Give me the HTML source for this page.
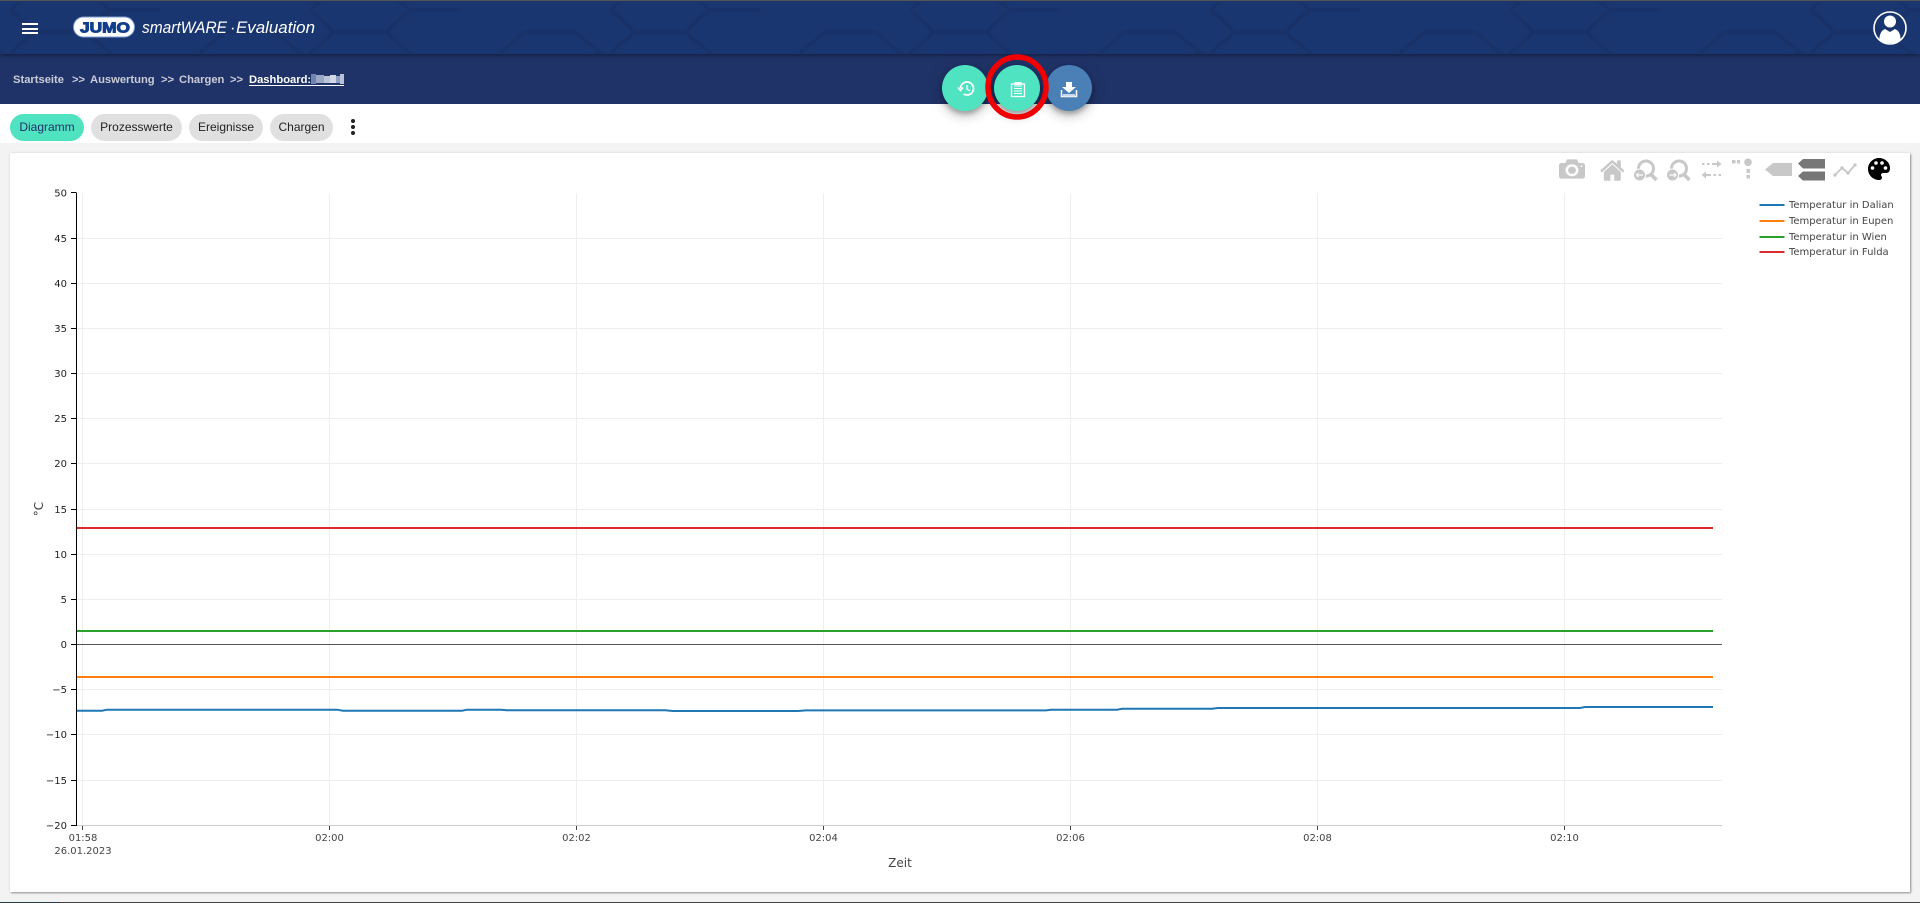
<!DOCTYPE html>
<html lang="de"><head><meta charset="utf-8"><title>JUMO smartWARE Evaluation</title>
<style>
html,body{margin:0;padding:0;width:1920px;height:903px;overflow:hidden;background:#f3f3f3;font-family:"Liberation Sans",sans-serif}
.a{position:absolute}
svg text{white-space:pre}
.t{position:absolute;top:114px;height:27px;border-radius:14px;background:#e0e0e0;color:#222;font-size:12px;line-height:27px;text-align:center}
.b{position:absolute;top:65px;width:46px;height:46px;border-radius:50%;box-shadow:0 3px 5px rgba(0,0,0,.25),0 6px 10px rgba(0,0,0,.14),0 1px 18px rgba(0,0,0,.12)}
.bc{position:absolute;top:73px;font-size:11.2px;font-weight:bold;color:#c9ccd8;line-height:14px;white-space:nowrap}
</style></head><body>
<div class="a" style="left:0;top:0;width:1920px;height:54px;background:#1a3670;box-shadow:0 1px 4px rgba(0,0,0,.45);z-index:2;border-top:1px solid #555;box-sizing:border-box">
<svg width="1920" height="53" style="position:absolute;left:0;top:0">
<defs><pattern id="h" width="300" height="86" patternUnits="userSpaceOnUse" patternTransform="translate(10,-12)"><path d="M0 21 25 0H75L100 21 75 43H25ZM100 21H150M25 43 0 64 25 86M75 43 100 64 75 86M190 64 215 43H265L290 64 265 86" fill="none" stroke="#000" stroke-opacity=".055" stroke-width="4"/></pattern></defs>
<rect width="1920" height="53" fill="url(#h)"/>
<g fill="#fff"><rect x="22" y="22" width="16" height="2"/><rect x="22" y="27" width="16" height="2"/><rect x="22" y="31" width="16" height="2"/></g>
<rect x="73.5" y="16" width="61" height="20" rx="10" fill="#fff" stroke="#7f9fd0"/>
<text x="80" y="31.500" font-size="15" font-weight="bold" fill="#123f8c" stroke="#123f8c" stroke-width="1" textLength="50" lengthAdjust="spacingAndGlyphs" font-family="Liberation Sans">JUMO</text>
<g font-size="16.500" font-style="italic" fill="#fff" font-family="Liberation Sans">
<text x="142" y="32" textLength="85" lengthAdjust="spacingAndGlyphs">smartWARE</text>
<text x="230" y="32" font-style="normal">·</text>
<text x="236" y="32" textLength="79" lengthAdjust="spacingAndGlyphs">Evaluation</text>
</g>
<circle cx="1890" cy="27" r="16" fill="none" stroke="#fff" stroke-width="1.6"/>
<circle cx="1890" cy="20.5" r="6" fill="#fff"/>
<path d="M1879.5 40C1879 34 1881 29.500 1885 28L1890 31 1895 28C1899 29.500 1901 34 1900.500 40 1894 43 1886 43 1879.500 40Z" fill="#fff"/>
</svg></div>
<div class="a" style="left:0;top:54px;width:1920px;height:50px;background:#203368"></div>
<div class="bc" style="left:13px">Startseite</div><div class="bc" style="left:72px">&gt;&gt;</div>
<div class="bc" style="left:90px">Auswertung</div><div class="bc" style="left:161px">&gt;&gt;</div>
<div class="bc" style="left:179px">Chargen</div><div class="bc" style="left:230px">&gt;&gt;</div>
<div class="bc" style="left:249px;color:#fff">Dashboard:</div>
<div class="a" style="left:249px;top:85px;width:95px;height:1px;background:#fff"></div>
<svg class="a" style="left:310px;top:73px" width="36" height="12"><rect x="1" y="1" width="5" height="10" fill="#6f84b0"/><rect x="6" y="2" width="8" height="8" fill="#9aa8c6"/><rect x="14" y="3" width="6" height="7" fill="#bcc5d8"/><rect x="20" y="2" width="6" height="8" fill="#d2d8e4"/><rect x="26" y="3" width="4" height="7" fill="#8d9fc3"/><rect x="30" y="1" width="4" height="10" fill="#b8c2d6"/></svg>
<div class="a" style="left:0;top:104px;width:1920px;height:39px;background:#fff"></div>
<div class="t" style="left:10px;width:74px;background:#50e3c2;color:#203368">Diagramm</div>
<div class="t" style="left:91px;width:91px">Prozesswerte</div>
<div class="t" style="left:189px;width:74px">Ereignisse</div>
<div class="t" style="left:270px;width:63px">Chargen</div>
<svg class="a" style="left:348px;top:118px" width="10" height="18"><circle cx="5" cy="3" r="2" fill="#222"/><circle cx="5" cy="9" r="2" fill="#222"/><circle cx="5" cy="15" r="2" fill="#222"/></svg>
<div class="a" style="left:10px;top:153px;width:1900px;height:739px;background:#fff;box-shadow:1px 1px 2px rgba(0,0,0,.4),0 0 3px rgba(0,0,0,.06)"></div>
<svg class="a" style="left:0;top:0" width="1920" height="903">
<g stroke="#eee" stroke-width="1" shape-rendering="crispEdges">
<path d="M77 238.500H1722M77 283.500H1722M77 328.500H1722M77 373.500H1722M77 418.500H1722M77 463.500H1722M77 509.500H1722M77 554.500H1722M77 599.500H1722M77 689.500H1722M77 734.500H1722M77 780.500H1722"/>
<path d="M82.500 193V825M329.500 193V825M576.500 193V825M823.500 193V825M1070.500 193V825M1317.500 193V825M1564.500 193V825"/>
</g>
<path d="M77 644.500H1722" stroke="#555" stroke-width="1" shape-rendering="crispEdges"/>
<path d="M77 528H1713" stroke="#dc2b2f" stroke-width="2"/>
<path d="M77 631H1713" stroke="#2ca02c" stroke-width="2"/>
<path d="M77 677H1713" stroke="#ff7f0e" stroke-width="2"/>
<path d="M77 710.700H102L107 709.700H337L343 710.700H462L467 709.700H501L507 710.300H665L673 711H798L806 710.400H1046L1051 709.700H1117L1122 708.800H1212L1218 708H1580L1585 707H1713" fill="none" stroke="#1f77b4" stroke-width="2"/>
<path d="M77 825.500H1722" stroke="#ccc" stroke-width="1" shape-rendering="crispEdges"/>
<path d="M76.500 192.500V826" stroke="#000" stroke-width="1" shape-rendering="crispEdges"/>
<path d="M71 192.500H76M71 238.500H76M71 283.500H76M71 328.500H76M71 373.500H76M71 418.500H76M71 463.500H76M71 509.500H76M71 554.500H76M71 599.500H76M71 644.500H76M71 689.500H76M71 734.500H76M71 780.500H76M71 825.500H76" stroke="#000" shape-rendering="crispEdges"/>
<path d="M82.500 826V830M329.500 826V830M576.500 826V830M823.500 826V830M1070.500 826V830M1317.500 826V830M1564.500 826V830" stroke="#444" shape-rendering="crispEdges"/>
<g font-family="DejaVu Sans" font-size="10" fill="#222" text-anchor="end">
<text x="67" y="196.500">50</text><text x="67" y="242">45</text><text x="67" y="287">40</text><text x="67" y="332">35</text><text x="67" y="377">30</text><text x="67" y="422">25</text><text x="67" y="467">20</text><text x="67" y="513">15</text><text x="67" y="558">10</text><text x="67" y="603">5</text><text x="67" y="648">0</text><text x="67" y="693">−5</text><text x="67" y="738">−10</text><text x="67" y="784">−15</text><text x="67" y="829">−20</text>
</g>
<g font-family="DejaVu Sans" font-size="10" fill="#444" text-anchor="middle">
<text x="83" y="841">01:58</text><text x="83" y="854">26.01.2023</text>
<text x="329.500" y="841">02:00</text><text x="576.500" y="841">02:02</text><text x="823.500" y="841">02:04</text><text x="1070.500" y="841">02:06</text><text x="1317.500" y="841">02:08</text><text x="1564.500" y="841">02:10</text>
<text x="900" y="867" font-size="12">Zeit</text>
<text transform="translate(43,509) rotate(-90)" font-size="12">°C</text>
</g>
<g stroke-width="2">
<path d="M1759.500 205H1784.500" stroke="#1f77b4"/><path d="M1759.500 221H1784.500" stroke="#ff7f0e"/><path d="M1759.500 237H1784.500" stroke="#2ca02c"/><path d="M1759.500 252H1784.500" stroke="#dc2b2f"/>
</g>
<g font-family="DejaVu Sans" font-size="10" fill="#444">
<text x="1789" y="208">Temperatur in Dalian</text><text x="1789" y="224">Temperatur in Eupen</text><text x="1789" y="240">Temperatur in Wien</text><text x="1789" y="255">Temperatur in Fulda</text>
</g>
<!-- modebar -->
<g fill="#c8c8c8">
<g transform="translate(1559,181) scale(.026,-.024) translate(0,150)"><path d="m500 450c-83 0-150-67-150-150 0-83 67-150 150-150 83 0 150 67 150 150 0 83-67 150-150 150z m400 150h-120c-16 0-34 13-39 29l-31 93c-6 15-23 28-40 28h-340c-16 0-34-13-39-28l-31-94c-6-15-23-28-40-28h-120c-55 0-100-45-100-100v-450c0-55 45-100 100-100h800c55 0 100 45 100 100v450c0 55-45 100-100 100z m-400-550c-138 0-250 112-250 250 0 138 112 250 250 250 138 0 250-112 250-250 0-138-112-250-250-250z m365 380c-19 0-35 16-35 35 0 19 16 35 35 35 19 0 35-16 35-35 0-19-16-35-35-35z"/></g>
<g transform="translate(1600,180.500) scale(.0265,-.0285)"><path d="m786 296v-267q0-15-11-26t-25-10h-214v214h-143v-214h-214q-15 0-25 10t-11 26v267q0 1 0 2t0 2l321 264 321-264q1-1 1-4z m124 39l-34-41q-5-5-12-6h-2q-7 0-12 3l-386 322-386-322q-7-4-13-4-7 2-12 7l-35 41q-4 5-3 13t6 12l401 334q18 15 42 15t43-15l136-114v109q0 8 5 13t13 5h107q8 0 13-5t5-13v-227l122-102q5-5 6-12t-4-13z"/></g>
<path d="M1765 169.500 1773 163H1792V176H1773Z"/>
<path d="M1798 163.500 1803 159H1825V168.500H1803ZM1798 176 1803 171.500H1825V180.500H1803Z" fill="#777"/>
<rect x="1732" y="160" width="3.500" height="3.500"/><rect x="1737" y="160" width="3" height="3.500"/>
<circle cx="1748" cy="162.300" r="3.800"/><rect x="1746.500" y="169" width="3.500" height="4"/><rect x="1746.500" y="175" width="3.500" height="3.500"/>
</g>
<g fill="none" stroke="#c8c8c8" stroke-width="3">
<circle cx="1646" cy="168.500" r="7.500"/><path d="M1651 174.500 1656.500 180" stroke-width="3.500"/>
<circle cx="1679" cy="168.500" r="7.500"/><path d="M1684 174.500 1689.500 180" stroke-width="3.500"/>
</g>
<g fill="#c8c8c8"><circle cx="1639.500" cy="175" r="6" stroke="#fff"/><circle cx="1672.500" cy="175" r="6" stroke="#fff"/></g>
<path d="M1643 175H1636.500M1638.500 173 1636.500 175 1638.500 177M1669.500 175H1676M1674 173 1676 175 1674 177" fill="none" stroke="#fff" stroke-width="1.200"/>
<g stroke="#c8c8c8" fill="#c8c8c8">
<path d="M1702 164H1704.500M1707 164H1709.500M1712 164H1719" fill="none" stroke-width="2"/><path d="M1717 160.500 1721.500 164 1717 167.500Z" stroke="none"/>
<path d="M1704 175H1711M1713.500 175H1716M1718.500 175H1721" fill="none" stroke-width="2"/><path d="M1706 171.500 1701.500 175 1706 178.500Z" stroke="none"/>
</g>
<path d="M1835 175 1842 168 1848 173 1855 165" fill="none" stroke="#c8c8c8" stroke-width="1.800"/>
<circle cx="1835" cy="175" r="1.700" fill="#c8c8c8"/><circle cx="1842" cy="168" r="1.700" fill="#c8c8c8"/><circle cx="1848" cy="173" r="1.700" fill="#c8c8c8"/><circle cx="1855" cy="165" r="1.700" fill="#c8c8c8"/>
<path d="M1879 158C1873 158 1868 163 1868 169 1868 175 1873 180 1879 180 1881 180 1882 179 1882 177.500 1882 176.500 1881 176 1881 175 1881 173.500 1882 173 1884 173H1886C1889 173 1890 171 1890 168 1890 162.500 1885 158 1879 158Z" fill="#000"/>
<g fill="#fff"><circle cx="1872.500" cy="168" r="1.800"/><circle cx="1876" cy="163" r="1.800"/><circle cx="1882" cy="163" r="1.800"/><circle cx="1885.500" cy="168" r="1.800"/></g>
</svg>
<div class="b" style="left:942px;background:#50e3c2"></div>
<div class="b" style="left:1046px;background:#4a80b5"></div>
<div class="b" style="left:994px;background:#50e3c2"></div>
<svg class="a" style="left:0;top:0;z-index:4" width="1920" height="140">
<g fill="none" stroke="#fff">
<circle cx="967" cy="88.500" r="6.500" stroke-width="1.800" stroke-dasharray="34 7" transform="rotate(180 967 88.500)"/>
<path d="M967 85V89L970 91" stroke-width="1.300"/>
<path d="M958 87.500 960.500 90.500 963 87.500" stroke-width="1.500"/>
<path d="M1011.500 84H1024.500V96.500H1011.500Z" stroke-width="1.300"/>
<path d="M1014 86H1022M1014 88.500H1022M1014 91H1022M1014 93.500H1022" stroke-width="1"/>
</g>
<rect x="1014.500" y="82" width="7" height="3" fill="#fff"/>
<path d="M1066 82H1072V87H1076L1069 93 1062 87H1066Z" fill="#fff"/>
<path d="M1061.500 90V96.500H1076.500V90" fill="none" stroke="#fff" stroke-width="1.500"/>
<rect x="1063" y="94" width="12" height="2.500" fill="#c8d8e8"/>
<ellipse cx="1017" cy="87" rx="29" ry="30" fill="none" stroke="#f00000" stroke-width="5.500"/>
</svg>
<div class="a" style="left:0;top:902px;width:1920px;height:1px;background:#444"></div>
<div class="a" style="left:0;top:902px;width:60px;height:1px;background:#1f3d4a"></div>
</body></html>
